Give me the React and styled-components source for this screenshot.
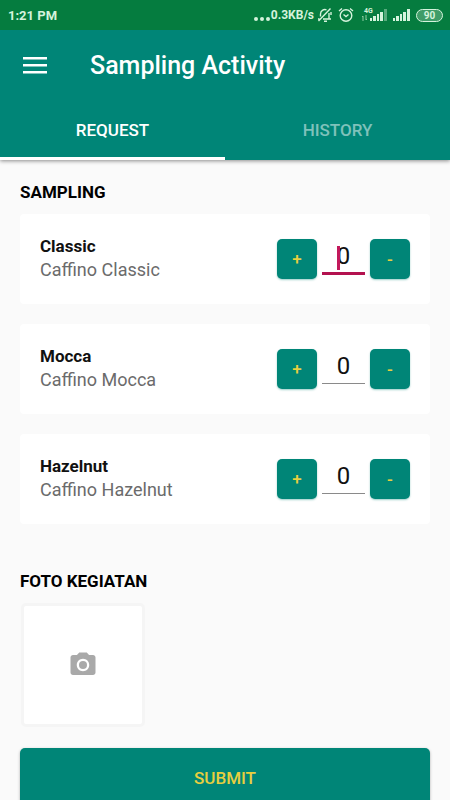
import { useState } from "react";
import styled, { createGlobalStyle } from "styled-components";

const products = [
  { name: "Classic", detail: "Caffino Classic" },
  { name: "Mocca", detail: "Caffino Mocca" },
  { name: "Hazelnut", detail: "Caffino Hazelnut" },
];

function SignalBars({ faded }) {
  return (
    <svg width="17" height="12" viewBox="0 0 17 12" fill="#d5f3dc">
      <rect x="0" y="9" width="2" height="3" />
      <rect x="3" y="7" width="3" height="5" />
      <rect x="7" y="5" width="2" height="7" />
      <rect x="10" y="3" width="3" height="9" />
      <rect x="14" y="0" width="3" height="12" opacity={faded ? 0.4 : 1} />
    </svg>
  );
}

function StatusBar() {
  return (
    <Status>
      <span>1:21 PM</span>
      <StatusIcons>
        <svg width="16" height="4" viewBox="0 0 16 4" fill="#d5f3dc">
          <circle cx="2" cy="2" r="2" />
          <circle cx="8" cy="2" r="2" />
          <circle cx="14" cy="2" r="2" />
        </svg>
        <Speed>0.3KB/s</Speed>
        <Bell
          width="16"
          height="16"
          viewBox="0 0 16 16"
          fill="none"
          stroke="#d5f3dc"
          strokeWidth="1.4"
        >
          <path d="M3.500 9.500V7a4.500 4.500 0 0 1 6-4.200M12 6v6M6 12h8M1 12h1.500M7 14.300h3M1.500 14 13.500 1.500M14 5v3" />
        </Bell>
        <Alarm
          width="16"
          height="16"
          viewBox="0 0 16 16"
          fill="none"
          stroke="#d5f3dc"
          strokeWidth="1.4"
        >
          <circle cx="8" cy="8.500" r="5.800" />
          <path d="M5.500 7.500 8 9.500 10.500 7.500M1 4l3-2.500M15 4l-3-2.500" />
        </Alarm>
        <Network>
          <small>4G</small>
          <Arrows width="5" height="6" viewBox="0 0 5 6" fill="none" stroke="#8fcba2">
            <path d="M1 6V1M0 2l1-1M4 0v5M5 4 4 5" />
          </Arrows>
          <SignalBars faded />
        </Network>
        <SignalBars />
        <Battery>90</Battery>
      </StatusIcons>
    </Status>
  );
}

function ProductCard({ name, detail, focused }) {
  const [count, setCount] = useState("0");
  const change = (step) => setCount(String(Math.max(0, Number(count) + step)));

  return (
    <Card>
      <Info>
        <h3>{name}</h3>
        <p>{detail}</p>
      </Info>
      <Counter>
        <StepButton aria-label={`Add ${name}`} onClick={() => change(1)}>
          +
        </StepButton>
        <Field>
          <Amount
            aria-label={`${name} amount`}
            inputMode="numeric"
            value={count}
            $focused={focused}
            onChange={(e) => setCount(e.target.value)}
          />
          {focused && <Caret />}
        </Field>
        <StepButton aria-label={`Remove ${name}`} onClick={() => change(-1)}>
          -
        </StepButton>
      </Counter>
    </Card>
  );
}

function App() {
  const [tab, setTab] = useState("request");

  return (
    <>
      <GlobalStyle />
      <Header>
        <StatusBar />
        <Toolbar>
          <MenuButton aria-label="Menu">
            <svg width="24" height="17" viewBox="0 0 24 17" fill="#fff">
              <path d="M0 0h24v2.500H0zM0 7h24v2.500H0zM0 14h24v2.500H0z" />
            </svg>
          </MenuButton>
          <h1>Sampling Activity</h1>
        </Toolbar>
        <Tabs role="tablist">
          <Tab
            role="tab"
            aria-selected={tab === "request"}
            $active={tab === "request"}
            onClick={() => setTab("request")}
          >
            REQUEST
          </Tab>
          <Tab
            role="tab"
            aria-selected={tab === "history"}
            $active={tab === "history"}
            onClick={() => setTab("history")}
          >
            HISTORY
          </Tab>
        </Tabs>
      </Header>
      <Main>
        <Heading>SAMPLING</Heading>
        <Cards>
          {products.map((item, i) => (
            <ProductCard key={item.name} {...item} focused={i === 0} />
          ))}
        </Cards>
        <Heading>FOTO KEGIATAN</Heading>
        <PhotoButton aria-label="Foto kegiatan">
          <svg width="30" height="30" viewBox="0 0 24 24" fill="#a9a9a9">
            <circle cx="12" cy="12" r="3.200" />
            <path d="M9 2 7.170 4H4c-1.100 0-2 .9-2 2v12c0 1.100.9 2 2 2h16c1.100 0 2-.9 2-2V6c0-1.100-.9-2-2-2h-3.170L15 2H9zm3 15c-2.760 0-5-2.240-5-5s2.240-5 5-5 5 2.240 5 5-2.240 5-5 5z" />
          </svg>
        </PhotoButton>
        <SubmitButton>SUBMIT</SubmitButton>
      </Main>
    </>
  );
}

const GlobalStyle = createGlobalStyle`
  * {
    box-sizing: border-box;
  }
  html {
    scrollbar-width: none;
  }
  body {
    margin: 0;
    background: #fafafa;
    font-family: Roboto, sans-serif;
  }
  h1, h2, h3, p {
    margin: 0;
  }
  button, input {
    font-family: inherit;
    border: none;
    padding: 0;
  }
`;

const Header = styled.header`
  background: #008577;
  box-shadow: 0 1px 4px rgba(0, 0, 0, 0.45);
`;

const Status = styled.div`
  display: flex;
  align-items: center;
  justify-content: space-between;
  height: 30px;
  padding: 0 7px 0 8px;
  background: #057c3f;
  color: #d5f3dc;
  font-size: 13px;
  font-weight: 700;
`;

const StatusIcons = styled.div`
  display: flex;
  align-items: center;
  > svg:first-child {
    margin-top: 8px;
  }
`;

const Speed = styled.span`
  margin-left: 1px;
  font-size: 12px;
`;

const Bell = styled.svg`
  margin-left: 3px;
`;

const Alarm = styled.svg`
  margin: 0 8px 0 5px;
`;

const Network = styled.div`
  display: grid;
  grid-template-columns: 8px 17px;
  grid-template-rows: 6px 6px;
  margin-right: 6px;
  small {
    grid-area: 1 / 1 / 2 / 3;
    margin-left: 2px;
    font-size: 7px;
    line-height: 4px;
  }
  svg:last-child {
    grid-area: 1 / 2 / 3 / 3;
  }
`;

const Arrows = styled.svg`
  grid-area: 2 / 1;
`;

const Battery = styled.span`
  margin-left: 6px;
  width: 27px;
  border: 1px solid #d5f3dc;
  border-radius: 7px;
  background: #3f9c68;
  font-size: 10px;
  line-height: 11px;
  text-align: center;
`;

const Toolbar = styled.div`
  display: flex;
  align-items: center;
  height: 71px;
  padding: 0 23px;
  h1 {
    color: #fff;
    font-size: 25px;
    font-weight: 500;
    line-height: 32px;
  }
`;

const MenuButton = styled.button`
  display: flex;
  width: 67px;
  background: none;
`;

const Tabs = styled.div`
  display: flex;
`;

const Tab = styled.button`
  flex: 1;
  height: 59px;
  border-top: 1px solid transparent;
  border-bottom: 3px solid ${(p) => (p.$active ? "#fff" : "transparent")};
  background: none;
  color: ${(p) => (p.$active ? "#fff" : "rgba(255, 255, 255, 0.5)")};
  font-size: 17px;
  font-weight: 500;
`;

const Main = styled.main`
  padding: 21px 20px 20px;
`;

const Heading = styled.h2`
  color: #000;
  font-size: 17px;
  font-weight: 700;
  line-height: 22px;
`;

const Cards = styled.div`
  display: flex;
  flex-direction: column;
  gap: 20px;
  margin: 11px 0 46px;
`;

const Card = styled.section`
  display: flex;
  align-items: center;
  justify-content: space-between;
  height: 90px;
  padding: 0 20px;
  border-radius: 4px;
  background: #fff;
`;

const Info = styled.div`
  padding-bottom: 2px;
  font-size: 18px;
  line-height: 24px;
  h3 {
    color: #111;
    font-size: 17px;
    font-weight: 700;
  }
  p {
    color: #6b6b6b;
  }
`;

const Counter = styled.div`
  display: flex;
  align-items: center;
  gap: 5px;
`;

const StepButton = styled.button`
  width: 40px;
  height: 40px;
  border-radius: 5px;
  background: #008577;
  box-shadow: 0 1px 2px rgba(0, 133, 119, 0.4);
  color: #e8cf3f;
  font-size: 17px;
  font-weight: 500;
`;

const Field = styled.div`
  position: relative;
  display: flex;
  align-items: flex-start;
  height: 40px;
`;

const Amount = styled.input`
  width: 43px;
  height: ${(p) => (p.$focused ? 36 : 35)}px;
  border-bottom: ${(p) => (p.$focused ? "3px solid #b3124f" : "1px solid #8a8a8a")};
  background: none;
  color: #111;
  font-size: 24px;
  text-align: center;
  outline: none;
`;

/* text cursor of the focused amount */
const Caret = styled.span`
  position: absolute;
  top: 7px;
  left: 15px;
  width: 3px;
  height: 24px;
  background: #c2185b;
`;

const PhotoButton = styled.button`
  display: flex;
  align-items: center;
  justify-content: center;
  width: 124px;
  height: 124px;
  margin: 11px 0 21px 1px;
  border: 3px solid #f5f5f5;
  border-radius: 5px;
  background: #fff;
`;

const SubmitButton = styled.button`
  width: 100%;
  height: 60px;
  border-radius: 5px;
  background: #008577;
  box-shadow: 0 1px 3px rgba(0, 0, 0, 0.3);
  color: #e8cf3f;
  font-size: 17px;
  font-weight: 500;
`;

export default App;
